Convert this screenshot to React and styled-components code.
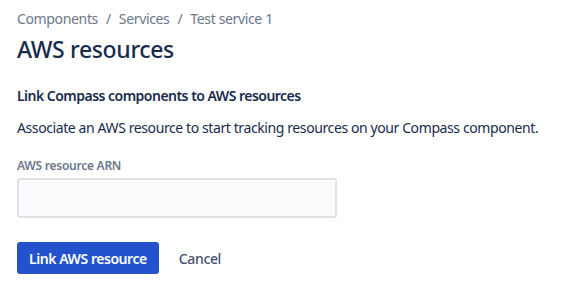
import React from "react";
import styled, { createGlobalStyle } from "styled-components";

const GlobalStyle = createGlobalStyle`
  body {
    margin: 0;
    background: #ffffff;
    font-family: "Noto Sans", "Open Sans", sans-serif;
    color: #172b4d;
    letter-spacing: -0.35px;
  }
`;

const App = () => {
  return (
    <Page>
      <GlobalStyle />
      <Breadcrumbs>
        <Crumb>Components</Crumb>
        <Separator>/</Separator>
        <Crumb>Services</Crumb>
        <Separator>/</Separator>
        <Crumb>Test service 1</Crumb>
      </Breadcrumbs>
      <Title>AWS resources</Title>

      <Section>
        <SectionTitle>Link Compass components to AWS resources</SectionTitle>
        <Description>
          Associate an AWS resource to start tracking resources on your Compass
          component.
        </Description>
      </Section>

      <Field>
        <Label htmlFor="arn">AWS resource ARN</Label>
        <Input id="arn" type="text" />
      </Field>

      <Actions>
        <PrimaryButton>Link AWS resource</PrimaryButton>
        <SubtleButton>Cancel</SubtleButton>
      </Actions>
    </Page>
  );
};

export default App;

// Styled components
const Page = styled.div`
  padding: 9px 17px 0;
  display: flex;
  flex-direction: column;
`;

const Breadcrumbs = styled.nav`
  display: flex;
  align-items: center;
  font-size: 14px;
  line-height: 20px;
  color: #6b778c;
`;

const Crumb = styled.span``;

const Separator = styled.span`
  padding: 0 8px;
`;

const Title = styled.h1`
  margin: 6px 0 0;
  font-size: 23px;
  line-height: 28px;
  font-weight: 500;
  letter-spacing: -0.35px;
  color: #172b4d;
`;

const Section = styled.div`
  margin-top: 23px;
  display: flex;
  flex-direction: column;
  gap: 12px;
`;

const SectionTitle = styled.h3`
  margin: 0;
  font-size: 14px;
  line-height: 20px;
  font-weight: 600;
  letter-spacing: -0.52px;
  color: #172b4d;
`;

const Description = styled.p`
  margin: 0;
  font-size: 14px;
  line-height: 20px;
  letter-spacing: -0.4px;
  color: #172b4d;
  white-space: nowrap;
`;

const Field = styled.div`
  margin-top: 20px;
  display: flex;
  flex-direction: column;
  gap: 4px;
`;

const Label = styled.label`
  font-size: 12px;
  line-height: 16px;
  font-weight: 600;
  color: #6b778c;
  letter-spacing: -0.25px;
`;

const Input = styled.input`
  box-sizing: border-box;
  width: 320px;
  height: 40px;
  padding: 0 8px;
  background: #fafbfc;
  border: 2px solid #dfe1e6;
  border-radius: 3px;
  outline: none;
  font: inherit;
`;

const Actions = styled.div`
  margin-top: 24px;
  display: flex;
  align-items: center;
  gap: 8px;
`;

const PrimaryButton = styled.button`
  height: 32px;
  padding: 0 12px;
  background: #2353cc;
  color: #ffffff;
  border: none;
  border-radius: 3px;
  font-family: inherit;
  font-size: 14px;
  font-weight: 600;
  letter-spacing: -0.45px;
  cursor: pointer;
`;

const SubtleButton = styled.button`
  height: 32px;
  padding: 0 12px;
  background: transparent;
  color: #42526e;
  border: none;
  border-radius: 3px;
  font-family: inherit;
  font-size: 14px;
  font-weight: 500;
  letter-spacing: -0.35px;
  cursor: pointer;
`;
